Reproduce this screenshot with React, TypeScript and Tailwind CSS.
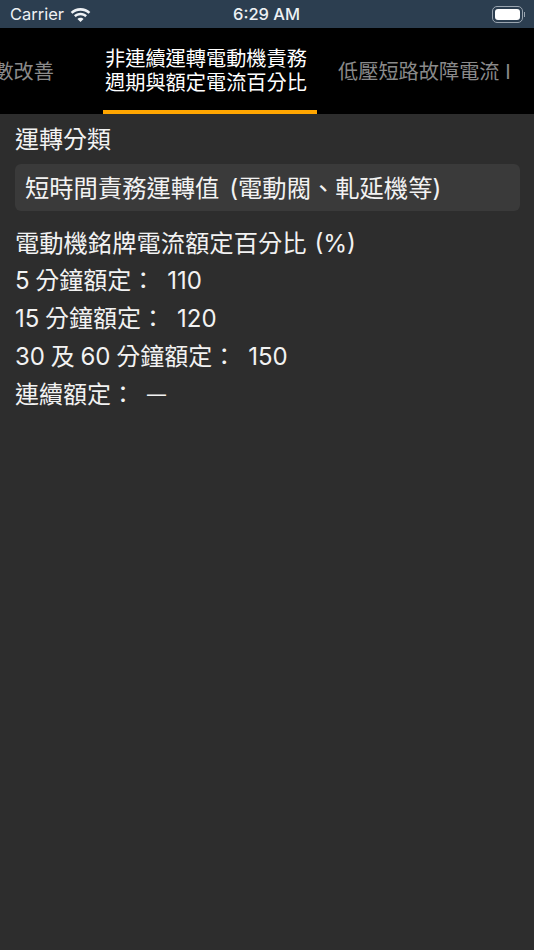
const font = { fontFamily: 'Inter, "Noto Sans CJK TC", sans-serif' }

function StatusBar() {
  return (
    <div className="h-[28px] bg-[#2c3e50] flex items-center justify-between pl-[10px] pr-[9px] pt-[1px] relative text-[#eef1f4]">
      <div className="flex items-center gap-[6px]">
        <span className="text-[16.5px] leading-none">Carrier</span>
        <svg width="21" height="16" viewBox="1 0 18 14" fill="currentColor">
          <path d="M10 3.2c2.700 0 5.100 1 7 2.800l1.600-1.700C16.300 2.100 13.300.8 10 .8S3.700 2.100 1.400 4.300L3 6c1.900-1.800 4.300-2.800 7-2.800z" />
          <path d="M10 7.300c1.600 0 3 .6 4.100 1.600l1.600-1.700C14.200 5.800 12.200 5 10 5s-4.200.8-5.700 2.200l1.600 1.700C7 7.900 8.400 7.300 10 7.300z" />
          <path d="M10 9.300c-1.100 0-2 .4-2.700 1.100L10 13.200l2.700-2.800c-.7-.7-1.600-1.100-2.700-1.100z" />
        </svg>
      </div>
      <span className="absolute left-[233px] text-[16.5px] font-medium leading-none">6:29 AM</span>
      <div className="flex items-center gap-[1px]">
        <div className="w-[31px] h-[17px] rounded-[5px] border border-[#9aa5b0] p-[2px]">
          <div className="h-full w-full rounded-[3px] bg-white" />
        </div>
        <div className="w-[1px] h-[5px] bg-[#9aa5b0]" />
      </div>
    </div>
  )
}

function Tabs() {
  return (
    <div className="h-[86px] bg-black flex overflow-hidden relative">
      <div className="w-[103px] shrink-0 flex justify-end items-center pr-[49px] pt-[2px] overflow-hidden">
        <span className="text-[20.2px] leading-[24px] text-[#8a8a8a] whitespace-nowrap">數改善</span>
      </div>
      <div className="w-[214px] shrink-0 flex flex-col items-center justify-center border-b-[4px] border-[#ffa500] text-white text-[20.2px] leading-[24px] pt-[4px] pr-[8px]">
        <span className="whitespace-nowrap">非連續運轉電動機責務</span>
        <span className="whitespace-nowrap">週期與額定電流百分比</span>
      </div>
      <div className="flex-1 flex items-center pl-[21px] pt-[2px]">
        <span className="text-[20.2px] leading-[24px] text-[#8a8a8a] whitespace-nowrap">低壓短路故障電流 I</span>
      </div>
    </div>
  )
}

const rows = [
  { label: '5 分鐘額定：', value: '110' },
  { label: '15 分鐘額定：', value: '120' },
  { label: '30 及 60 分鐘額定：', value: '150' },
  { label: '連續額定：', value: '—' },
]

export default function App() {
  return (
    <div className="w-[534px] h-[950px] bg-[#2d2d2d] flex flex-col overflow-hidden" style={font}>
      <StatusBar />
      <Tabs />
      <div className="pl-[15px] pr-[14px] text-[#f2f2f2] text-[24px] leading-[38px]">
        <div className="mt-[7px]">運轉分類</div>
        <div className="mt-[5px] h-[47px] rounded-[6px] bg-[#3a3a3a] flex items-center px-[10px]">
          <span className="whitespace-nowrap text-[24.3px] [word-spacing:3px]">短時間責務運轉值 (電動閥、軋延機等)</span>
        </div>
        <div className="mt-[13px] text-[24.3px] [word-spacing:1px]">電動機銘牌電流額定百分比 (%)</div>
        {rows.map((row) => (
          <div key={row.label} className="flex items-center gap-[12px] whitespace-nowrap">
            <span className="[word-spacing:-1px]">{row.label}</span>
            <span className={row.value === '—' ? 'text-[19px]' : ''}>{row.value}</span>
          </div>
        ))}
      </div>
    </div>
  )
}
